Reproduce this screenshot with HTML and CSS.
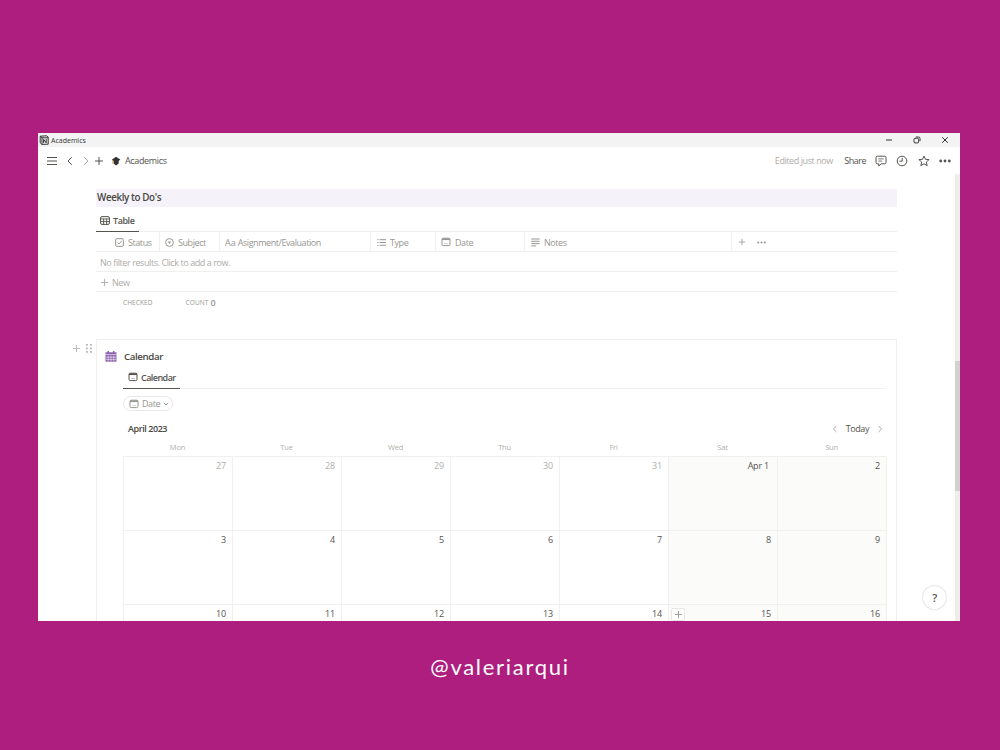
FILE: index.html
```html
<!DOCTYPE html>
<html lang="en">
  <head>
    <meta charset="UTF-8" />
    <meta name="viewport" content="width=device-width, initial-scale=1.0" />
    <title>Academics</title>
    <link rel="stylesheet" href="styles.css">
  </head>
  <body>
    <svg class="defs" width="0" height="0">
      <symbol id="i-plus" viewBox="0 0 10 10"><path d="M5 1v8M1 5h8" /></symbol>
      <symbol id="i-left" viewBox="0 0 10 10"><path d="M6.8 1.2L3 5l3.8 3.8" /></symbol>
      <symbol id="i-right" viewBox="0 0 10 10"><path d="M3.2 1.2L7 5L3.2 8.8" /></symbol>
      <symbol id="i-dots" viewBox="0 0 12 4">
        <g fill="currentColor" stroke="none"><circle cx="1.7" cy="2" r="1.4" /><circle cx="6" cy="2" r="1.4" /><circle cx="10.3" cy="2" r="1.4" /></g>
      </symbol>
      <symbol id="i-cal" viewBox="0 0 10 10">
        <rect x="1" y="1.2" width="8" height="7.4" rx="1.2" /><path d="M1 2.2h8" stroke-width="1.7" /><path d="M3 6.6h4" stroke-width=".4" />
      </symbol>
    </svg>

    <div class="window">
      <div class="titlebar">
        <svg class="logo" viewBox="0 0 10 10"><path d="M1.2 1.2L7.6.8L9.2 2v7.2l-6.4.2L1.2 7.8z" fill="#eee" stroke="#222" stroke-width=".9" /><path d="M1.4 1.4L3 2.8h6M3 2.8v6.4M4.6 8V4.4l2.6 3.4V4" stroke="#222" stroke-width=".9" /></svg>
        <span class="app-name">Academics</span>
        <div class="controls">
          <svg width="8" height="8" viewBox="0 0 8 8"><path d="M1 4h6" /></svg>
          <svg width="8" height="8" viewBox="0 0 8 8"><rect x="1" y="2.3" width="4.6" height="4.6" rx="1" /><path d="M2.8 1h2.7q1.5 0 1.5 1.5v2.7" /></svg>
          <svg width="8" height="8" viewBox="0 0 8 8"><path d="M1.2 1.2l5.6 5.6M6.8 1.2L1.2 6.8" /></svg>
        </div>
      </div>

      <div class="topbar">
        <svg class="menu" width="12" height="10" viewBox="0 0 12 10"><path d="M1 1.5h10M1 5h10M1 8.5h10" /></svg>
        <svg class="back" width="10" height="10"><use href="#i-left" /></svg>
        <svg class="forward" width="10" height="10"><use href="#i-right" /></svg>
        <svg class="add" width="10" height="10"><use href="#i-plus" /></svg>
        <svg class="cap" width="10" height="10" viewBox="0 0 10 10"><path d="M5 .8L9.3 3.6L7.7 5v2.6L5 9.4L2.6 7.6V5L.8 3.7z" fill="#333" stroke="none" /><path d="M1.8 4.5v3" stroke="#e3a44a" /></svg>
        <span class="crumb">Academics</span>
        <div class="actions">
          <span class="edited">Edited just now</span>
          <span class="share">Share</span>
          <svg width="12" height="12" viewBox="0 0 12 12"><path d="M2.4 1.2h7.2q1.4 0 1.4 1.4v4.8q0 1.4-1.4 1.4H6.2L3.8 11V8.8H2.4Q1 8.8 1 7.4V2.6q0-1.4 1.4-1.4z" /><path d="M3.3 3.9h5.4M3.3 6.1h3.8" stroke-width=".8" /></svg>
          <svg width="12" height="12" viewBox="0 0 12 12"><circle cx="6" cy="6" r="4.8" /><path d="M6.2 3v3.2H3.4" /></svg>
          <svg width="12" height="12" viewBox="0 0 12 12"><path d="M6 1l1.4 3.3 3.7.3-2.8 2.4.9 3.7L6 8.8l-3.2 1.9.9-3.7L.9 4.6l3.7-.3z" /></svg>
          <svg width="12" height="4"><use href="#i-dots" /></svg>
        </div>
      </div>

      <div class="page">
        <div class="content">
          <h2 class="heading">Weekly to Do's</h2>

          <div class="tabs">
            <div class="tab tab-table">
              <svg width="10" height="9" viewBox="0 0 10 9"><rect x=".6" y=".6" width="8.8" height="7.8" rx="1.4" /><path d="M.6 2.9h8.8M.6 5.6h8.8M3.6 2.9v5.5M6.6 2.9v5.5" stroke-width=".9" /></svg>
              <span>Table</span>
            </div>
          </div>

          <div class="row table-head">
            <div class="cell status">
              <svg width="9" height="9" viewBox="0 0 9 9"><rect x=".7" y=".7" width="7.6" height="7.6" rx="1" /><path d="M2.5 4.6l1.4 1.4 2.7-3" /></svg>
              <span>Status</span>
            </div>
            <div class="cell subject">
              <svg width="9" height="9" viewBox="0 0 9 9"><circle cx="4.5" cy="4.5" r="3.9" /><path d="M2.8 3.6h3.4L4.5 5.9z" fill="currentColor" stroke="none" /></svg>
              <span>Subject</span>
            </div>
            <div class="cell name"><span class="aa">Aa</span><span>Asignment/Evaluation</span></div>
            <div class="cell type">
              <svg width="9" height="9" viewBox="0 0 9 9"><path d="M.3 1.7h1.2M.3 4.5h1.2M.3 7.3h1.2M2.6 1.7H9M2.6 4.5H9M2.6 7.3H9" /></svg>
              <span>Type</span>
            </div>
            <div class="cell date"><svg width="10" height="10"><use href="#i-cal" /></svg><span>Date</span></div>
            <div class="cell notes">
              <svg width="9" height="9" viewBox="0 0 9 9"><path d="M.3 1h8.4M.3 3.3h8.4M.3 5.6h8.4M.3 7.9h5" /></svg>
              <span>Notes</span>
            </div>
            <div class="cell extra">
              <svg width="8" height="8"><use href="#i-plus" /></svg>
              <svg width="9" height="3"><use href="#i-dots" /></svg>
            </div>
          </div>
          <div class="row empty">No filter results. Click to add a row.</div>
          <div class="row new"><svg width="9" height="9"><use href="#i-plus" /></svg><span>New</span></div>
          <div class="summary">
            <span class="checked">CHECKED</span>
            <span class="count">COUNT</span><span class="zero">0</span>
          </div>

          <div class="block">
            <div class="handles">
              <svg width="9" height="9"><use href="#i-plus" /></svg>
              <svg width="6" height="9" viewBox="0 0 6 9"><g fill="currentColor" stroke="none"><rect x="0" y="0" width="1.8" height="1.8" /><rect x="4" y="0" width="1.8" height="1.8" /><rect x="0" y="3.5" width="1.8" height="1.8" /><rect x="4" y="3.5" width="1.8" height="1.8" /><rect x="0" y="7" width="1.8" height="1.8" /><rect x="4" y="7" width="1.8" height="1.8" /></g></svg>
            </div>
            <div class="card">
              <div class="card-title">
                <svg width="12" height="11" viewBox="0 0 12 11"><path d="M.5 1.3h2V0h1.6v1.3h3.8V0h1.6v1.3h2v2.2H.5z" fill="#9065b0" stroke="none" /><path d="M.5 4h11v6.7H.5z" fill="#9065b0" stroke="none" /><path d="M1 6.2h10M1 8.4h10M3.2 4.4v6M6 4.4v6M8.8 4.4v6" stroke="#fff" stroke-width=".5" /></svg>
                <h3>Calendar</h3>
              </div>
              <div class="card-body">
                <div class="tabs cal-tabs">
                  <div class="tab tab-cal"><svg width="10" height="10"><use href="#i-cal" /></svg><span>Calendar</span></div>
                </div>
                <div class="pill">
                  <svg width="10" height="10"><use href="#i-cal" /></svg>
                  <span>Date</span>
                  <svg width="6" height="6" viewBox="0 0 6 6"><path d="M.8 1.8L3 4l2.2-2.2" /></svg>
                </div>
                <div class="month">
                  <span class="month-name">April 2023</span>
                  <div class="month-nav">
                    <svg width="8" height="8"><use href="#i-left" /></svg>
                    <span>Today</span>
                    <svg width="8" height="8"><use href="#i-right" /></svg>
                  </div>
                </div>
                <div class="weekdays">
                  <span>Mon</span><span>Tue</span><span>Wed</span><span>Thu</span><span>Fri</span><span>Sat</span><span>Sun</span>
                </div>
                <div class="days">
                  <div class="day other">27</div>
                  <div class="day other">28</div>
                  <div class="day other">29</div>
                  <div class="day other">30</div>
                  <div class="day other">31</div>
                  <div class="day weekend first">Apr 1</div>
                  <div class="day weekend">2</div>
                  <div class="day">3</div>
                  <div class="day">4</div>
                  <div class="day">5</div>
                  <div class="day">6</div>
                  <div class="day">7</div>
                  <div class="day weekend">8</div>
                  <div class="day weekend">9</div>
                  <div class="day">10</div>
                  <div class="day">11</div>
                  <div class="day">12</div>
                  <div class="day">13</div>
                  <div class="day">14</div>
                  <div class="day weekend"><span class="add-day"><svg width="9" height="9"><use href="#i-plus" /></svg></span>15</div>
                  <div class="day weekend">16</div>
                </div>
              </div>
            </div>
          </div>
        </div>
        <div class="scrollbar"><div class="thumb"></div></div>
      </div>
      <div class="help">?</div>
    </div>

    <div class="handle">@valeriarqui</div>
  </body>
</html>
```
FILE: styles.css
```css
* {
  box-sizing: border-box;
}
body {
  margin: 0;
  height: 750px;
  padding-top: 133px;
  overflow: hidden;
  background: #ae1e7f;
  font-family: "Open Sans", "Noto Sans", sans-serif;
  font-size: 9px;
  letter-spacing: -0.43px;
  color: #55534e;
}
svg {
  display: block;
  flex: none;
  fill: none;
  stroke: currentColor;
  stroke-width: 1;
}
.defs {
  position: absolute;
}
.window {
  position: relative;
  width: 922px;
  height: 488px;
  margin-left: 38px;
  overflow: hidden;
  background: #fff;
}

/* window chrome */
.titlebar {
  display: flex;
  align-items: center;
  height: 14px;
  padding-left: 1px;
  background: #f3f3f3;
  font-size: 7px;
  color: #333;
}
.logo {
  width: 10px;
  height: 10px;
  margin-right: 2px;
}
.app-name {
  letter-spacing: 0;
}
.controls {
  display: flex;
  gap: 20px;
  margin-left: auto;
  margin-right: 11px;
}
.topbar {
  display: flex;
  align-items: center;
  height: 27px;
  padding-left: 8px;
}
.back {
  margin-left: 7px;
}
.forward {
  margin-left: 6px;
  color: #aaa;
}
.add {
  margin-left: 3px;
}
.cap {
  margin: 0 4px 0 7px;
}
.crumb {
  letter-spacing: -0.35px;
}
.actions {
  display: flex;
  align-items: center;
  gap: 9.5px;
  margin-left: auto;
  margin-right: 9px;
}
.edited {
  color: #aeada9;
}
.share {
  margin: 0 -1px 0 2px;
  letter-spacing: -0.5px;
}

.page {
  display: flex;
  height: 447px;
}
.content {
  width: 801px;
  margin-left: 58px;
  padding-top: 15px;
}
.scrollbar {
  width: 5px;
  margin-left: auto;
  padding-top: 187px;
  background: #ededea;
}
.thumb {
  height: 130px;
  background: #d1d1cd;
}
.heading {
  height: 18px;
  margin: 0;
  padding-left: 1px;
  background: #f5f3f9;
  font-size: 9.8px;
  font-weight: 600;
  line-height: 18px;
  letter-spacing: -0.38px;
  color: #48463f;
}

/* to do table */
.tabs {
  display: flex;
  height: 25px;
  border-bottom: 1px solid #f0f0ef;
}
.tab {
  display: flex;
  align-items: center;
  gap: 4px;
  height: 25px;
  padding: 2px 4px 0;
  border-bottom: 1.5px solid #55534e;
  font-weight: 600;
}
.tab-table {
  width: 43px;
  gap: 3px;
}
.row {
  display: flex;
  align-items: center;
  height: 20px;
  padding-top: 1px;
  border-bottom: 1px solid #f0f0ef;
  color: #adaca8;
}
.table-head {
  padding-top: 0;
  color: #979692;
}
.cell {
  display: flex;
  align-items: center;
  gap: 4px;
  height: 19px;
  padding: 1px 0 0 5px;
  border-right: 1px solid #f0f0ef;
}
.status {
  width: 64px;
  padding-left: 19px;
}
.subject {
  width: 60px;
}
.name {
  width: 151px;
  gap: 2px;
}
.aa {
  letter-spacing: 0;
}
.type {
  width: 65px;
}
.date {
  width: 89px;
}
.notes {
  width: 207px;
}
.notes,
.type {
  padding-left: 6px;
}
.extra {
  gap: 11px;
  padding-left: 6px;
  border-right: 0;
}
.empty {
  padding-left: 4px;
  letter-spacing: -0.42px;
}
.new {
  gap: 3px;
  padding-left: 4px;
}
.summary {
  display: flex;
  align-items: center;
  height: 20px;
  padding-left: 27px;
  font-size: 6.5px;
  letter-spacing: 0.1px;
  color: #979692;
}
.count {
  margin: 0 2px 0 33px;
}
.zero {
  font-size: 9px;
  font-weight: 600;
}

/* calendar block */
.block {
  position: relative;
  height: 400px;
  margin-top: 27px;
}
.handles {
  position: absolute;
  top: 5px;
  left: -24px;
  display: flex;
  gap: 5px;
  color: #b8b7b3;
}
.card {
  height: 400px;
  padding: 8px 10px 0 8px;
  border: 1px solid #f0f0ef;
}
.card-title {
  display: flex;
  align-items: center;
  gap: 7px;
  height: 17px;
}
.card-title h3 {
  margin: 0;
  font-size: 9.7px;
  font-weight: 600;
  letter-spacing: -0.38px;
  color: #48463f;
}
.card-body {
  padding-left: 18px;
}
.cal-tabs,
.tab-cal {
  height: 24px;
}
.tab-cal {
  width: 57px;
  padding: 1px 4px 0 5px;
  gap: 3px;
  letter-spacing: -0.55px;
}
.pill {
  display: flex;
  align-items: center;
  gap: 3px;
  width: 50px;
  height: 15px;
  margin-top: 7px;
  padding-left: 5px;
  border: 1px solid #e8e8e6;
  border-radius: 8px;
  color: #979692;
}
.month {
  display: flex;
  align-items: center;
  height: 17px;
  margin-top: 9px;
  padding: 0 2px 0 5px;
}
.month-name {
  font-weight: 600;
  color: #48463f;
}
.month-nav {
  display: flex;
  align-items: center;
  gap: 7px;
  margin-left: auto;
}
.month-nav svg {
  color: #979692;
}
.weekdays {
  display: grid;
  grid-template-columns: repeat(7, 109px);
  height: 19px;
  font-size: 7.5px;
  line-height: 21px;
  text-align: center;
  letter-spacing: -0.2px;
  color: #b0afab;
}
.days {
  display: grid;
  grid-template-columns: repeat(7, 109px);
  grid-auto-rows: 74px;
  border-top: 1px solid #f0f0ef;
  border-left: 1px solid #f0f0ef;
}
.day {
  position: relative;
  padding: 3px 6px;
  border-right: 1px solid #f0f0ef;
  border-bottom: 1px solid #f0f0ef;
  line-height: 12px;
  text-align: right;
  letter-spacing: -0.2px;
}
.other {
  color: #b0afab;
}
.first {
  padding-right: 8px;
}
.weekend {
  background: #fbfbfa;
}
.add-day {
  position: absolute;
  top: 3px;
  left: 2px;
  display: grid;
  place-items: center;
  width: 14px;
  height: 13px;
  border: 1px solid #e8e8e6;
  border-radius: 2px;
  background: #fff;
  color: #9b9a96;
}
.help {
  position: absolute;
  right: 14px;
  bottom: 12px;
  width: 23px;
  height: 23px;
  border-radius: 50%;
  background: #fff;
  box-shadow: 0 0 2px rgba(0, 0, 0, 0.3);
  font-size: 11px;
  font-weight: 600;
  line-height: 23px;
  text-align: center;
}

.handle {
  margin-top: 31px;
  font-family: Lato, sans-serif;
  font-size: 22px;
  line-height: 30px;
  letter-spacing: 1.7px;
  text-align: center;
  color: #fff;
}
```
